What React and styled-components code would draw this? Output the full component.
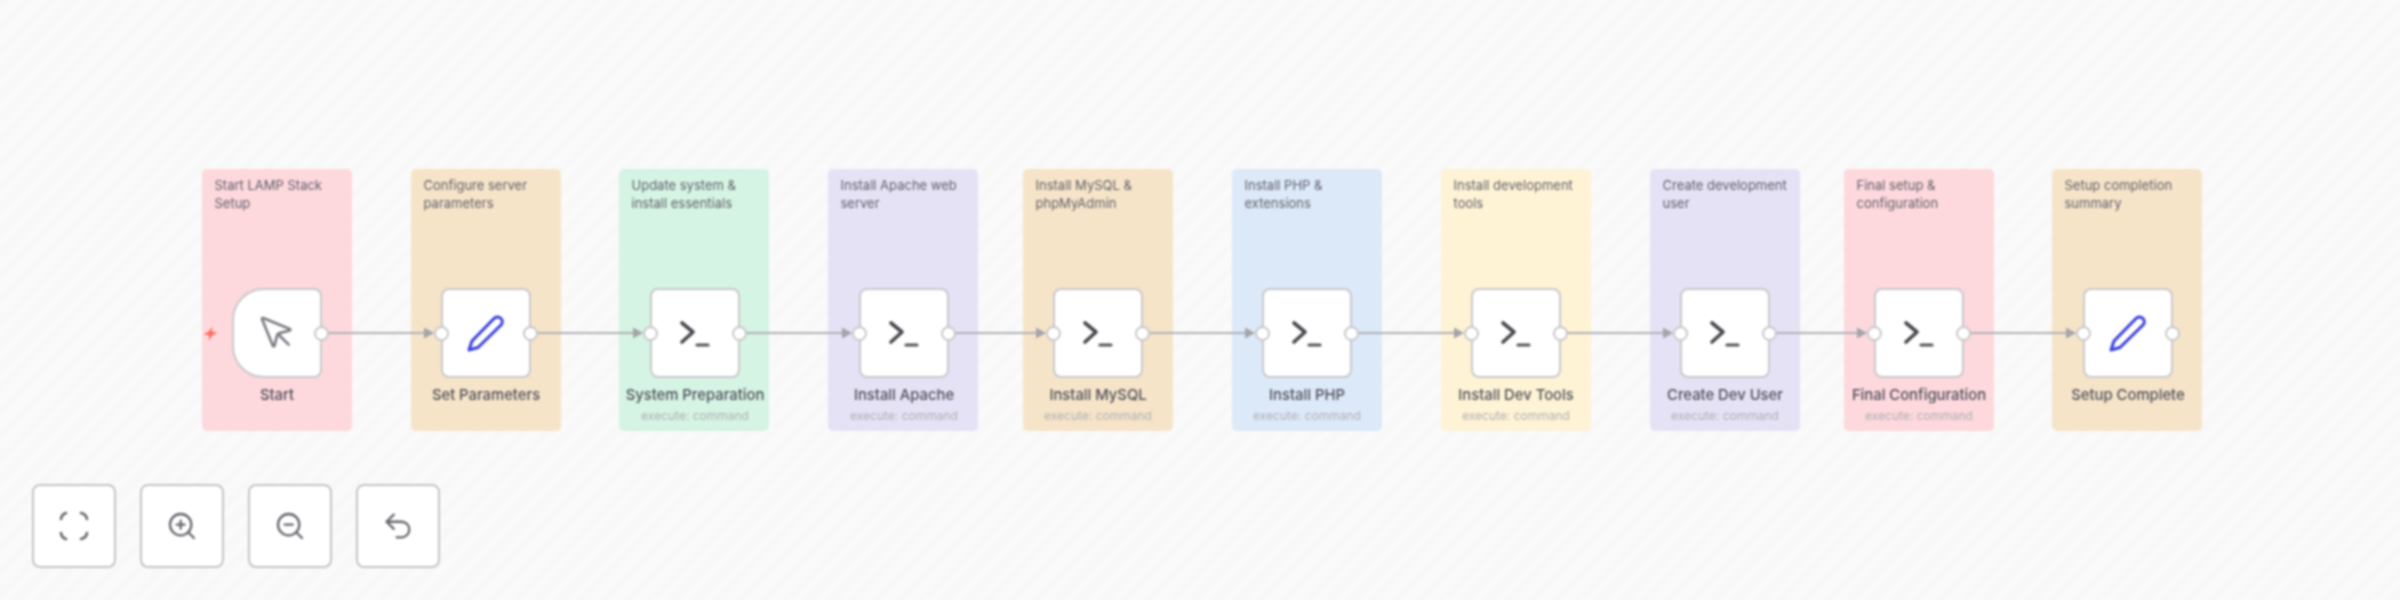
import React from "react";
import styled, { createGlobalStyle } from "styled-components";
import { MousePointer, ZoomIn, ZoomOut, Undo2 } from "lucide-react";

const Global = createGlobalStyle`
  html, body { margin: 0; padding: 0; background: #f8f8f8; }
  * { box-sizing: border-box; }
`;

const Canvas = styled.main`
  position: relative;
  width: 2400px;
  height: 600px;
  overflow: hidden;
  font-family: Inter, "Liberation Sans", sans-serif;
  background: repeating-linear-gradient(135deg, #f8f8f8 0 8px, #fafafa 8px 16px);
  filter: blur(0.9px);
`;

const Sticky = styled.section`
  position: absolute;
  top: 169px;
  left: ${(p) => p.$x}px;
  width: 150px;
  height: 262px;
  padding: 7px 12.5px;
  border-radius: 5px;
  background: ${(p) => p.$color};
  color: #5f5f6a;
  font-size: 13px;
  line-height: 18px;
`;

const Edges = styled.svg`
  position: absolute;
  inset: 0;
  width: 2400px;
  height: 600px;
`;

const Node = styled.article`
  position: absolute;
  top: 288px;
  left: ${(p) => p.$x}px;
  width: 90px;
  display: flex;
  flex-direction: column;
  align-items: center;
`;

const NodeBox = styled.div`
  position: relative;
  flex: none;
  width: 90px;
  height: 90px;
  display: flex;
  align-items: center;
  justify-content: center;
  background: #fff;
  border: 2px solid #c8c8cb;
  border-radius: ${(p) => (p.$trigger ? "32px 8px 8px 32px" : "8px")};
`;

const Handle = styled.span`
  position: absolute;
  top: 50%;
  ${(p) => p.$side}: -9px;
  width: 15px;
  height: 15px;
  margin-top: -7.5px;
  border-radius: 50%;
  background: #fff;
  border: 2px solid #c8c8cb;
`;

const Bolt = styled.svg`
  position: absolute;
  left: -31px;
  top: 36px;
  width: 15px;
  height: 15px;
`;

const NodeTitle = styled.div`
  margin-top: 7px;
  white-space: nowrap;
  color: #4f4f5a;
  font-size: 14.8px;
  line-height: 20px;
  font-weight: 500;
`;

const NodeSub = styled.div`
  margin-top: 2px;
  white-space: nowrap;
  color: #b0b0b6;
  font-size: 12px;
  line-height: 18px;
`;

const Toolbar = styled.nav`
  position: absolute;
  left: 32px;
  top: 484px;
  display: flex;
  gap: 24px;
`;

const ToolButton = styled.button`
  width: 84px;
  height: 84px;
  padding: 0;
  display: flex;
  align-items: center;
  justify-content: center;
  background: #fff;
  border: 2px solid #c4c4c8;
  border-radius: 8px;
  color: #66666e;
`;

const TerminalIcon = () => (
  <svg width="40" height="40" viewBox="0 0 40 40" fill="none" stroke="#48484f" strokeLinecap="round" strokeLinejoin="round">
    <path d="M7 10 L18 19 L7 29" strokeWidth="3.6" />
    <path d="M22 32 H33" strokeWidth="3.2" stroke="#55555c" />
  </svg>
);

const PencilIcon = () => (
  <svg width="40" height="40" viewBox="-20 -20 40 40" fill="none" stroke="#3a40e2" strokeWidth="3" strokeLinejoin="round">
    <path d="M-17 17 L-14 8 L8 -14.5 a4.6 4.6 0 0 1 7 6.5 L-8 14.5 Z" />
  </svg>
);

const CursorIcon = () => <MousePointer size={40} strokeWidth={1.6} color="#7c7c84" />;

const FitIcon = () => (
  <svg width="30" height="30" viewBox="0 0 30 30" fill="none" stroke="currentColor" strokeWidth="2.6" strokeLinecap="round">
    <path d="M2 8 C2.4 5 4.4 2.8 7 2" />
    <path d="M22 2 C25.4 2.8 27.6 5 28 8" />
    <path d="M28 22 C27.6 25 25.4 27.2 22 28" />
    <path d="M7 28 C4.4 27.2 2.4 25 2 22" />
  </svg>
);

const steps = [
  { sx: 202, nx: 232, color: "#fdd8dc", note: ["Start LAMP Stack", "Setup"], title: "Start", icon: "start" },
  { sx: 411, nx: 441, color: "#f6e4c8", note: ["Configure server", "parameters"], title: "Set Parameters", icon: "edit" },
  { sx: 619, nx: 650, color: "#d5f4e3", note: ["Update system &", "install essentials"], title: "System Preparation", icon: "cmd", sub: true },
  { sx: 828, nx: 859, color: "#e5e2f5", note: ["Install Apache web", "server"], title: "Install Apache", icon: "cmd", sub: true },
  { sx: 1023, nx: 1053, color: "#f6e4c8", note: ["Install MySQL &", "phpMyAdmin"], title: "Install MySQL", icon: "cmd", sub: true },
  { sx: 1232, nx: 1262, color: "#dce9f9", note: ["Install PHP &", "extensions"], title: "Install PHP", icon: "cmd", sub: true },
  { sx: 1441, nx: 1471, color: "#fff3d5", note: ["Install development", "tools"], title: "Install Dev Tools", icon: "cmd", sub: true },
  { sx: 1650, nx: 1680, color: "#e5e2f5", note: ["Create development", "user"], title: "Create Dev User", icon: "cmd", sub: true },
  { sx: 1844, nx: 1874, color: "#fdd8dc", note: ["Final setup &", "configuration"], title: "Final Configuration", icon: "cmd", sub: true },
  { sx: 2052, nx: 2083, color: "#f6e4c8", note: ["Setup completion", "summary"], title: "Setup Complete", icon: "edit" },
];

const icons = { start: CursorIcon, edit: PencilIcon, cmd: TerminalIcon };
const EDGE_Y = 333;

export default function App() {
  return (
    <Canvas>
      <Global />
      {steps.map((s) => (
        <Sticky key={s.title} $x={s.sx} $color={s.color}>
          {s.note[0]}
          <br />
          {s.note[1]}
        </Sticky>
      ))}
      <Edges viewBox="0 0 2400 600">
        {steps.slice(1).map((s, i) => {
          const from = steps[i].nx + 90;
          const to = s.nx;
          return (
            <g key={s.title}>
              <path d={`M${from} ${EDGE_Y} H${to - 14}`} stroke="#b0b1b5" strokeWidth="2" fill="none" />
              <path d={`M${to - 17} ${EDGE_Y - 5.5} L${to - 7} ${EDGE_Y} L${to - 17} ${EDGE_Y + 5.5} Z`} fill="#a4a5aa" />
            </g>
          );
        })}
      </Edges>
      {steps.map((s) => {
        const Icon = icons[s.icon];
        const isTrigger = s.icon === "start";
        return (
          <Node key={s.title} $x={s.nx}>
            <NodeBox $trigger={isTrigger}>
              {isTrigger ? (
                <Bolt viewBox="0 0 12 12">
                  <path d="M7.5 0.5 L7 4.4 L11.5 5.2 L7.6 7.4 L4.6 11.5 L4.9 7.6 L0.5 6.6 L4.4 4.6 Z" fill="#ff6d5a" />
                </Bolt>
              ) : (
                <Handle $side="left" />
              )}
              <Icon />
              <Handle $side="right" />
            </NodeBox>
            <NodeTitle>{s.title}</NodeTitle>
            {s.sub && <NodeSub>execute: command</NodeSub>}
          </Node>
        );
      })}
      <Toolbar>
        <ToolButton aria-label="Fit view"><FitIcon /></ToolButton>
        <ToolButton aria-label="Zoom in"><ZoomIn size={32} strokeWidth={1.7} /></ToolButton>
        <ToolButton aria-label="Zoom out"><ZoomOut size={32} strokeWidth={1.7} /></ToolButton>
        <ToolButton aria-label="Undo"><Undo2 size={34} strokeWidth={1.6} /></ToolButton>
      </Toolbar>
    </Canvas>
  );
}
